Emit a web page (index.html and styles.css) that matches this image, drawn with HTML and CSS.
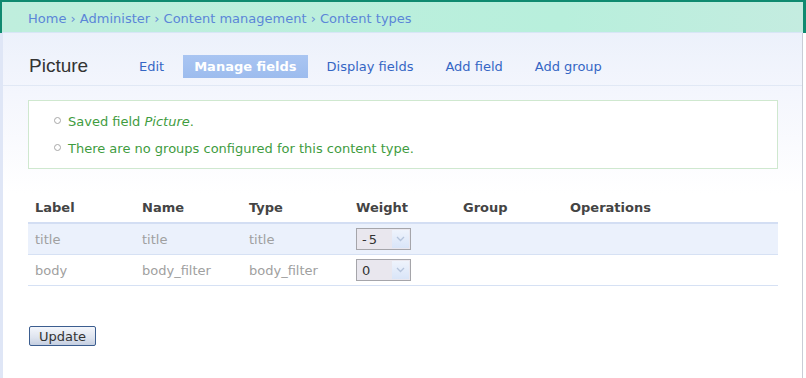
FILE: index.html
```html
<!DOCTYPE html>
<html lang="en">
<head>
    <meta charset="UTF-8">
    <title>Content types</title>
    <link rel="stylesheet" href="styles.css">
</head>
<body>
    <div class="frame">
        <div class="breadcrumb">
            <a href="#">Home</a> › <a href="#">Administer</a> › <a href="#">Content management</a> › <a href="#">Content types</a>
        </div>

        <div class="page">
            <div class="header">
                <h1 class="title">Picture</h1>
                <ul class="tabs">
                    <li><a href="#">Edit</a></li>
                    <li class="active"><a href="#">Manage fields</a></li>
                    <li><a href="#">Display fields</a></li>
                    <li><a href="#">Add field</a></li>
                    <li><a href="#">Add group</a></li>
                </ul>
            </div>

            <div class="content">
                <div class="messages">
                    <ul>
                        <li>Saved field <em>Picture</em>.</li>
                        <li>There are no groups configured for this content type.</li>
                    </ul>
                </div>

                <table class="fields">
                    <thead>
                        <tr>
                            <th>Label</th>
                            <th>Name</th>
                            <th>Type</th>
                            <th>Weight</th>
                            <th>Group</th>
                            <th class="ops">Operations</th>
                        </tr>
                    </thead>
                    <tbody>
                        <tr class="odd">
                            <td>title</td>
                            <td>title</td>
                            <td>title</td>
                            <td><span class="select"><span class="val">-5</span><span class="arrow"><svg width="9" height="6" viewBox="0 0 9 6"><path d="M1 1 L4.5 4.5 L8 1" fill="none" stroke="#b5c4dc" stroke-width="1.3"/></svg></span></span></td>
                            <td></td>
                            <td></td>
                        </tr>
                        <tr class="even">
                            <td>body</td>
                            <td>body_filter</td>
                            <td>body_filter</td>
                            <td><span class="select"><span class="val">0</span><span class="arrow"><svg width="9" height="6" viewBox="0 0 9 6"><path d="M1 1 L4.5 4.5 L8 1" fill="none" stroke="#b5c4dc" stroke-width="1.3"/></svg></span></span></td>
                            <td></td>
                            <td></td>
                        </tr>
                    </tbody>
                </table>

                <button class="btn">Update</button>
            </div>
        </div>
    </div>
</body>
</html>
```

FILE: styles.css
```css
html, body {
    margin: 0;
    padding: 0;
    height: 100%;
}
body {
    font-family: "DejaVu Sans", Verdana, sans-serif;
    font-size: 13px;
    background: #fff;
}
a {
    text-decoration: none;
}
.frame {
    height: 100%;
    display: flex;
    flex-direction: column;
}
.breadcrumb {
    height: 31px;
    line-height: 34px;
    padding-left: 26px;
    color: #6a8fd6;
    background: linear-gradient(to right, #bfeedd, #b8efdc 70%, #c4ece0);
    border-top: 2px solid #0f8a70;
    border-left: 2px solid #0f8a70;
    border-right: 3px solid #0f8a70;
    box-shadow: inset 0 -1px 0 #d8e6f6;
    white-space: nowrap;
}
.breadcrumb a {
    color: #5b86d8;
}
.page {
    flex: 1;
    background: linear-gradient(to bottom, #ecf1fb 0, #f4f6fd 60px, #ffffff 160px);
    border-left: 3px solid #dfe6f6;
    border-right: 1px solid #c9ccd6;
    margin-right: 3px;
}
.header {
    display: flex;
    align-items: center;
    height: 38px;
    padding: 14px 0 0 26px;
    border-bottom: 1px solid #e1e8f5;
}
.title {
    margin: 0;
    font-family: "Liberation Sans", Arial, sans-serif;
    font-weight: normal;
    font-size: 19px;
    color: #333;
    width: 94px;
}
.tabs {
    display: flex;
    list-style: none;
    margin: 0;
    padding: 0;
}
.tabs li a {
    display: block;
    height: 23px;
    line-height: 24px;
    padding: 0 16px;
    color: #3566c4;
}
.tabs li.active a {
    color: #fff;
    font-weight: bold;
    background: linear-gradient(to bottom, #a9c5f2, #9dbcee);
    margin: 0 3px;
    padding: 0 11px;
}
.content {
    padding: 14px 24px 0 25px;
}
.messages {
    border: 1px solid #cfe8cf;
    background: #fff;
    color: #3f9c3f;
    height: 67px;
}
.messages ul {
    margin: 0;
    padding: 7px 0 0 39px;
    list-style: none;
}
.messages li {
    line-height: 27px;
    position: relative;
}
.messages li::before {
    content: "";
    position: absolute;
    left: -14px;
    top: 9px;
    width: 5px;
    height: 5px;
    border: 1px solid #a8a8a8;
    border-radius: 50%;
}
.fields {
    width: 100%;
    border-collapse: collapse;
    margin-top: 25px;
}
.fields th {
    text-align: left;
    color: #444;
    font-weight: bold;
    padding: 6px 7px 7px;
    width: 93px;
    border-bottom: 2px solid #d3def3;
}
.fields th.ops {
    width: auto;
}
.fields td {
    color: #a0a0a0;
    height: 30px;
    padding: 0 7px;
    border-bottom: 1px solid #d6e1f4;
}
.fields tr.odd td {
    background: #ebf1fc;
}
.select {
    display: inline-flex;
    align-items: center;
    width: 53px;
    height: 20px;
    border: 1px solid #a5a5aa;
    background: #e9e7ee;
    color: #333;
    vertical-align: middle;
}
.select .val {
    flex: 1;
    padding-left: 5px;
    letter-spacing: 2px;
}
.select .arrow {
    width: 17px;
    height: 18px;
    margin-right: 1px;
    background: linear-gradient(to bottom, #eef3fc, #d9e5f8);
    display: flex;
    align-items: center;
    justify-content: center;
}
.btn {
    margin: 40px 0 0 1px;
    font-family: "DejaVu Sans", Verdana, sans-serif;
    font-size: 13px;
    color: #333;
    height: 20px;
    padding: 0 9px;
    border: 1px solid #3b5d8f;
    border-radius: 2px;
    background: linear-gradient(to bottom, #f4f6fb, #dde3ee 60%, #c4cee0);
}
```
